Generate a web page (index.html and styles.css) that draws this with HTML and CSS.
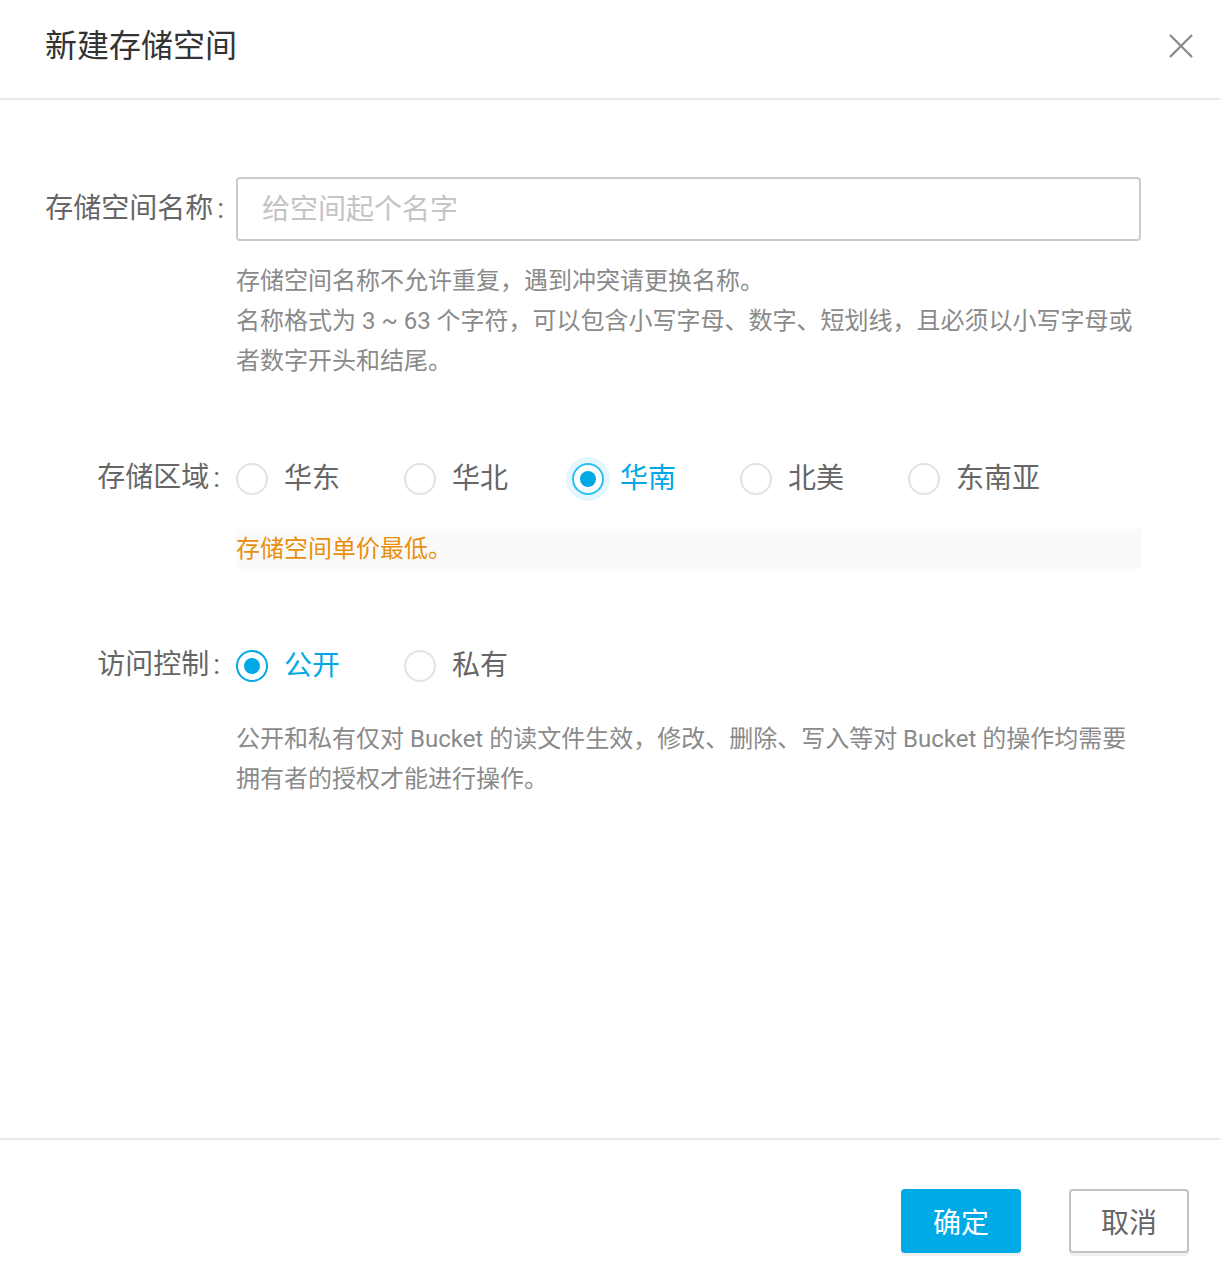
FILE: index.html
```html
<!DOCTYPE html>
<html lang="zh-CN">
<head>
<meta charset="utf-8">
<title>新建存储空间</title>
<link rel="stylesheet" href="styles.css">
</head>
<body>
<div class="dialog">
  <header class="dlg-head">
    <h1 class="dlg-title">新建存储空间</h1>
    <button class="dlg-close" aria-label="关闭">
      <svg width="26" height="26" viewBox="0 0 26 26"><path d="M2 2 L24 24 M24 2 L2 24" stroke="#888" stroke-width="2.2" fill="none"/></svg>
    </button>
  </header>
  <main class="dlg-body">
    <div class="field field-name">
      <label class="field-label">存储空间名称<span class="colon">:</span></label>
      <div class="field-ctrl">
        <input class="text-input" type="text" placeholder="给空间起个名字">
        <p class="help">存储空间名称不允许重复，遇到冲突请更换名称。<br>名称格式为 3 ~ 63 个字符，可以包含小写字母、数字、短划线，且必须以小写字母或<br>者数字开头和结尾。</p>
      </div>
    </div>
    <div class="field field-region">
      <label class="field-label">存储区域<span class="colon">:</span></label>
      <div class="field-ctrl">
        <div class="radio-group">
          <span class="radio"><span class="radio-circle"></span><span class="radio-text">华东</span></span>
          <span class="radio"><span class="radio-circle"></span><span class="radio-text">华北</span></span>
          <span class="radio checked focused"><span class="radio-circle"></span><span class="radio-text">华南</span></span>
          <span class="radio"><span class="radio-circle"></span><span class="radio-text">北美</span></span>
          <span class="radio"><span class="radio-circle"></span><span class="radio-text">东南亚</span></span>
        </div>
        <div class="notice">存储空间单价最低。</div>
      </div>
    </div>
    <div class="field field-access">
      <label class="field-label">访问控制<span class="colon">:</span></label>
      <div class="field-ctrl">
        <div class="radio-group">
          <span class="radio checked"><span class="radio-circle"></span><span class="radio-text">公开</span></span>
          <span class="radio"><span class="radio-circle"></span><span class="radio-text">私有</span></span>
        </div>
        <p class="help help-access">公开和私有仅对 Bucket 的读文件生效，修改、删除、写入等对 Bucket 的操作均需要<br>拥有者的授权才能进行操作。</p>
      </div>
    </div>
  </main>
  <footer class="dlg-foot">
    <button class="btn btn-primary">确定</button>
    <button class="btn btn-default">取消</button>
  </footer>
</div>
</body>
</html>
```
FILE: styles.css
```css
* { box-sizing: border-box; }
html, body { margin: 0; padding: 0; background: #fff; }
body {
  font-family: Roboto, "Noto Sans CJK SC", "Noto Sans", sans-serif;
  color: #666;
}
.dialog {
  width: 1220px;
  height: 1276px;
  display: flex;
  flex-direction: column;
}
.dlg-head {
  height: 100px;
  border-bottom: 2px solid #e8e8e8;
  display: flex;
  align-items: center;
  justify-content: space-between;
  padding: 0 26px 6px 45px;
}
.dlg-title {
  margin: 0;
  font-size: 32px;
  font-weight: 400;
  color: #333;
  line-height: 40px;
}
.dlg-close {
  border: 0;
  background: none;
  padding: 0;
  width: 26px;
  height: 26px;
  cursor: pointer;
  display: flex;
}
.dlg-body {
  flex: 1;
  padding-top: 77px;
}
.field {
  display: grid;
  grid-template-columns: 236px 905px;
}
.field-label {
  text-align: right;
  padding-right: 12px;
  font-size: 28px;
  color: #666;
  line-height: 64px;
}
.field-region .field-label,
.field-access .field-label { padding-right: 16px; }
.colon { margin-left: 4px; }
.text-input {
  display: block;
  width: 100%;
  height: 64px;
  border: 2px solid #cbcbcb;
  border-radius: 4px;
  padding: 0 24px;
  font-family: inherit;
  font-size: 28px;
  color: #333;
  outline: none;
}
.text-input::placeholder { color: #c4c4c4; }
.help {
  margin: 20px 0 0;
  font-size: 24px;
  line-height: 40px;
  color: #8a8a8a;
}
.field-region { margin-top: 65px; }
.field-access { margin-top: 64px; }
.radio-group {
  display: flex;
  height: 64px;
  align-items: center;
  padding-top: 2px;
}
.radio {
  display: inline-flex;
  align-items: center;
  margin-right: 64px;
  font-size: 28px;
  color: #666;
}
.radio-circle {
  position: relative;
  width: 32px;
  height: 32px;
  border-radius: 50%;
  border: 2px solid #e3e3e3;
  background: #fff;
  flex: none;
}
.radio-text { margin-left: 16px; line-height: 40px; }
.radio.checked .radio-circle { border-color: #00a9e6; }
.radio.checked .radio-circle::after {
  content: "";
  position: absolute;
  left: 6px;
  top: 6px;
  width: 16px;
  height: 16px;
  border-radius: 50%;
  background: #00a9e6;
}
.radio.checked .radio-text { color: #00a9e6; }
.radio.focused .radio-circle { box-shadow: 0 0 0 6px #e6f6fd; border-color: #29c0f2; }
.notice {
  margin-top: 19px;
  height: 40px;
  line-height: 40px;
  background: #fafafa;
  color: #e8900e;
  font-size: 24px;
}
.help-access { margin-top: 22px; }
.dlg-foot {
  height: 138px;
  border-top: 2px solid #e8e8e8;
  display: flex;
  justify-content: flex-end;
  align-items: flex-start;
  padding: 49px 31px 0 0;
  gap: 48px;
}
.btn {
  width: 120px;
  height: 64px;
  border-radius: 4px;
  font-family: inherit;
  font-size: 28px;
  cursor: pointer;
  box-shadow: 0 3px 0 #f0f0f0;
}
.btn-primary {
  background: #00aae7;
  border: 0;
  color: #fff;
}
.btn-default {
  background: #fff;
  border: 2px solid #c3c3c3;
  color: #666;
}
```
